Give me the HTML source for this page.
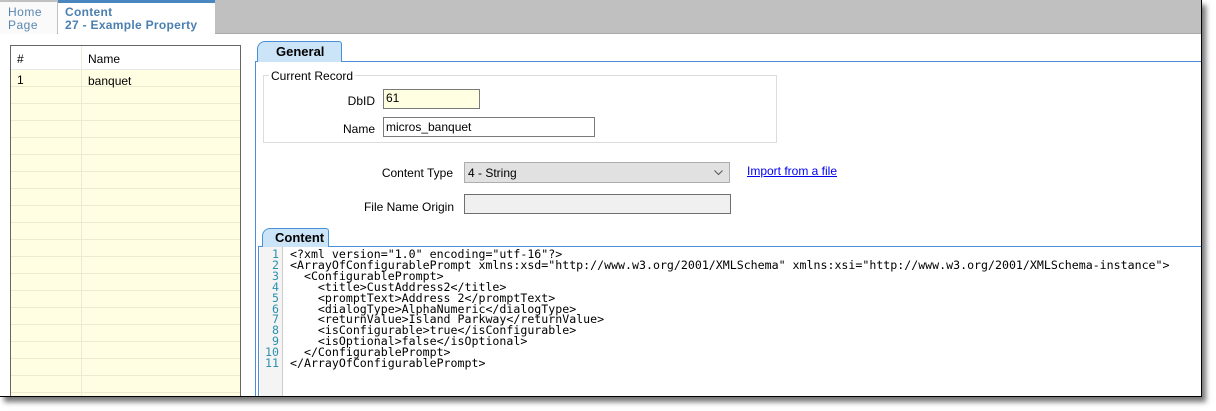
<!DOCTYPE html>
<html><head><meta charset="utf-8"><style>
*{margin:0;padding:0;box-sizing:border-box}
body{width:1216px;height:411px;background:#fff;position:relative;overflow:hidden;font-family:"Liberation Sans",Arial,sans-serif;font-size:12px;color:#000}
.a{position:absolute}
#frame{left:0;top:0;width:1202px;height:397px;border:1px solid #000;border-left:none;border-top:none;background:#fff;overflow:hidden;box-shadow:4px 5px 5px #777}
.row{position:absolute;left:0;width:229px;height:17px;border-bottom:1px solid #ecebd0}
.code{font-family:"DejaVu Sans Mono",monospace;font-size:11.6px;line-height:10.9px;white-space:pre;letter-spacing:0}
.lbl{text-align:right}
</style></head><body>
<div id="frame" class="a">
 <div class="a" style="left:0;top:0;width:1202px;height:34px;background:#c0c0c0;border-bottom:1px solid #ababab"></div>
 <div class="a" style="left:0;top:2px;width:57px;height:32px;background:#fafafa;color:#5a86b0;font-size:12px;line-height:13px;padding:4px 0 0 8px;letter-spacing:0.5px">Home<br>Page</div>
 <div class="a" style="left:58px;top:0;width:157px;height:35px;background:#fff;border-top:3px solid #4a86c0;color:#4a7fb0;font-weight:bold;font-size:12px;line-height:13px;padding:3px 0 0 7px;letter-spacing:0.3px">Content<br>27 - Example Property</div>

 <!-- left grid -->
 <div class="a" style="left:10px;top:45px;width:231px;height:360px;border:1px solid #666;background:#fffde2">
  <div class="row" style="top:24px"></div><div class="row" style="top:41px"></div><div class="row" style="top:58px"></div><div class="row" style="top:75px"></div><div class="row" style="top:92px"></div><div class="row" style="top:109px"></div><div class="row" style="top:126px"></div><div class="row" style="top:143px"></div><div class="row" style="top:160px"></div><div class="row" style="top:177px"></div><div class="row" style="top:194px"></div><div class="row" style="top:211px"></div><div class="row" style="top:228px"></div><div class="row" style="top:245px"></div><div class="row" style="top:262px"></div><div class="row" style="top:279px"></div><div class="row" style="top:296px"></div><div class="row" style="top:313px"></div><div class="row" style="top:330px"></div>
  <div class="a" style="left:0;top:0;width:229px;height:24px;background:#fff;border-bottom:1px solid #e8e8e8"></div>
  <div class="a" style="left:70px;top:0;width:1px;height:360px;background:#ecebd8"></div>
  <div class="a" style="left:6px;top:6px">#</div>
  <div class="a" style="left:77px;top:6px">Name</div>
  <div class="a" style="left:6px;top:27px">1</div>
  <div class="a" style="left:77px;top:28px">banquet</div>
 </div>

 <!-- General tab -->
 <div class="a" style="left:255px;top:61px;width:950px;height:340px;border-left:1px solid #4a90d9;border-top:1px solid #4a90d9"></div>
 <div class="a" style="left:257px;top:41px;width:85px;height:21px;background:#cce4f7;border:1px solid #4a90d9;border-bottom:none;border-radius:8px 3px 0 0;font-weight:bold;font-size:13px;padding:2px 0 0 18px">General</div>

 <div class="a" style="left:263px;top:75px;width:514px;height:68px;border:1px solid #dcdcdc"></div>
 <div class="a" style="left:269px;top:69px;background:#fff;padding:0 2px">Current Record</div>
 <div class="a lbl" style="left:300px;top:94px;width:75px">DbID</div>
 <div class="a" style="left:383px;top:89px;width:97px;height:20px;border:1px solid #7a7a7a;background:#ffffe1;padding:1px 2px">61</div>
 <div class="a lbl" style="left:300px;top:122px;width:75px">Name</div>
 <div class="a" style="left:383px;top:117px;width:212px;height:20px;border:1px solid #7a7a7a;padding:2px 2px">micros_banquet</div>

 <div class="a lbl" style="left:330px;top:166px;width:123px">Content Type</div>
 <div class="a" style="left:464px;top:162px;width:266px;height:21px;border:1px solid #adadad;background:#e1e1e1;padding:3px 3px">4 - String<svg style="position:absolute;right:6px;top:7px" width="9" height="6"><path d="M0.5 0.5L4.5 4.5L8.5 0.5" fill="none" stroke="#555"/></svg></div>
 <div class="a" style="left:747px;top:164px;color:#0000ee;text-decoration:underline">Import from a file</div>
 <div class="a lbl" style="left:330px;top:200px;width:124px">File Name Origin</div>
 <div class="a" style="left:464px;top:194px;width:267px;height:20px;border:1px solid #6f6f6f;background:#f0f0f0"></div>

 <!-- Content tab -->
 <div class="a" style="left:258px;top:246px;width:950px;height:160px;border-left:1px solid #4a90d9;border-top:1px solid #4a90d9"></div>
 <div class="a" style="left:262px;top:228px;width:67px;height:19px;background:#cce4f7;border:1px solid #4a90d9;border-bottom:none;border-radius:8px 3px 0 0;font-weight:bold;font-size:13px;padding:1px 0 0 12px">Content</div>
 <div class="a" style="left:260px;top:247px;width:23px;height:160px;background:#f4f4f4;border-right:1px solid #ccc"></div>
 <div class="a code" style="left:259px;top:249px;width:20px;text-align:right;color:#2b91af">1
2
3
4
5
6
7
8
9
10
11</div>
 <div class="a code" style="left:290px;top:249px">&lt;?xml version="1.0" encoding="utf-16"?&gt;
&lt;ArrayOfConfigurablePrompt xmlns:xsd="http://www.w3.org/2001/XMLSchema" xmlns:xsi="http://www.w3.org/2001/XMLSchema-instance"&gt;
  &lt;ConfigurablePrompt&gt;
    &lt;title&gt;CustAddress2&lt;/title&gt;
    &lt;promptText&gt;Address 2&lt;/promptText&gt;
    &lt;dialogType&gt;AlphaNumeric&lt;/dialogType&gt;
    &lt;returnValue&gt;Island Parkway&lt;/returnValue&gt;
    &lt;isConfigurable&gt;true&lt;/isConfigurable&gt;
    &lt;isOptional&gt;false&lt;/isOptional&gt;
  &lt;/ConfigurablePrompt&gt;
&lt;/ArrayOfConfigurablePrompt&gt;</div>
</div>
</body></html>
